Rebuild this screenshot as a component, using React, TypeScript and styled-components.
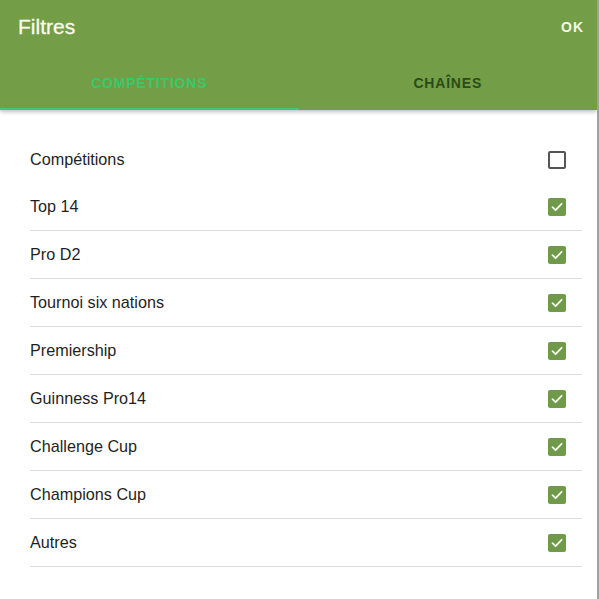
import React, { useState } from "react";
import styled, { createGlobalStyle } from "styled-components";

const GlobalStyle = createGlobalStyle`
  html, body {
    margin: 0;
    padding: 0;
    background: #ffffff;
  }
  body {
    font-family: "Liberation Sans", Arial, sans-serif;
  }
`;

const competitions = [
  "Top 14",
  "Pro D2",
  "Tournoi six nations",
  "Premiership",
  "Guinness Pro14",
  "Challenge Cup",
  "Champions Cup",
  "Autres",
];

const App: React.FC = () => {
  const [tab, setTab] = useState(0);
  const [checked, setChecked] = useState<boolean[]>(competitions.map(() => true));
  const all = checked.every(Boolean);

  return (
    <Screen>
      <GlobalStyle />
      <Header>
        <TopBar>
          <Title>Filtres</Title>
          <OkButton>OK</OkButton>
        </TopBar>
        <Tabs>
          <Tab active={tab === 0} onClick={() => setTab(0)}>
            COMPÉTITIONS
          </Tab>
          <Tab active={tab === 1} onClick={() => setTab(1)}>
            CHAÎNES
          </Tab>
        </Tabs>
      </Header>
      <List>
        <Row first>
          <Label>Compétitions</Label>
          <CheckBox
            checked={false}
            onClick={() => setChecked(competitions.map(() => !all))}
          />
        </Row>
        {competitions.map((name, i) => (
          <Row key={name}>
            <Label>{name}</Label>
            <CheckBox
              checked={checked[i]}
              onClick={() =>
                setChecked(checked.map((c, j) => (j === i ? !c : c)))
              }
            />
          </Row>
        ))}
      </List>
    </Screen>
  );
};

const CheckBox: React.FC<{ checked: boolean; onClick: () => void }> = ({
  checked,
  onClick,
}) => (
  <Box checked={checked} onClick={onClick}>
    {checked && (
      <svg width="14" height="14" viewBox="0 0 14 14">
        <path
          d="M2.5 7.2 L5.6 10.2 L11.6 3.8"
          fill="none"
          stroke="#f4f9e8"
          strokeWidth="1.8"
          strokeLinecap="round"
          strokeLinejoin="round"
        />
      </svg>
    )}
  </Box>
);

export default App;

const Screen = styled.div`
  width: 599px;
  height: 599px;
  box-sizing: border-box;
  border-right: 2px solid #a0a0a0;
  background: #ffffff;
  overflow: hidden;
`;

const Header = styled.div`
  background: #739e47;
  height: 110px;
  display: flex;
  flex-direction: column;
  box-shadow: 0 2px 4px rgba(0, 0, 0, 0.25);
  position: relative;
`;

const TopBar = styled.div`
  display: flex;
  justify-content: space-between;
  align-items: center;
  height: 54px;
  padding: 0 13px 0 18px;
`;

const Title = styled.div`
  color: #fbfbee;
  font-size: 21px;
  font-weight: 500;
  -webkit-text-stroke: 0.3px #fbfbee;
`;

const OkButton = styled.div`
  color: #f4f7e6;
  font-size: 14px;
  font-weight: bold;
  letter-spacing: 1px;
  cursor: pointer;
`;

const Tabs = styled.div`
  display: flex;
  flex: 1;
`;

const Tab = styled.div<{ active?: boolean }>`
  flex: 1;
  display: flex;
  align-items: center;
  justify-content: center;
  padding-top: 4px;
  font-size: 14px;
  font-weight: bold;
  letter-spacing: 0.8px;
  color: ${(p) => (p.active ? "#38c96a" : "#2c4a18")};
  border-bottom: 2px solid ${(p) => (p.active ? "#3fc86d" : "transparent")};
  cursor: pointer;
`;

const List = styled.div`
  padding: 27px 15px 0 30px;
`;

const Row = styled.div<{ first?: boolean }>`
  display: flex;
  justify-content: space-between;
  align-items: center;
  height: ${(p) => (p.first ? "45px" : "47px")};
  border-bottom: 1px solid ${(p) => (p.first ? "transparent" : "#dcdcdc")};
`;

const Label = styled.div`
  font-size: 16.2px;
  color: #1f1f1f;
`;

const Box = styled.div<{ checked: boolean }>`
  width: 18px;
  height: 18px;
  box-sizing: border-box;
  margin-right: 16px;
  border-radius: 2px;
  display: flex;
  align-items: center;
  justify-content: center;
  cursor: pointer;
  background: ${(p) => (p.checked ? "#6f9a4b" : "transparent")};
  border: ${(p) => (p.checked ? "none" : "2px solid #555555")};
`;
